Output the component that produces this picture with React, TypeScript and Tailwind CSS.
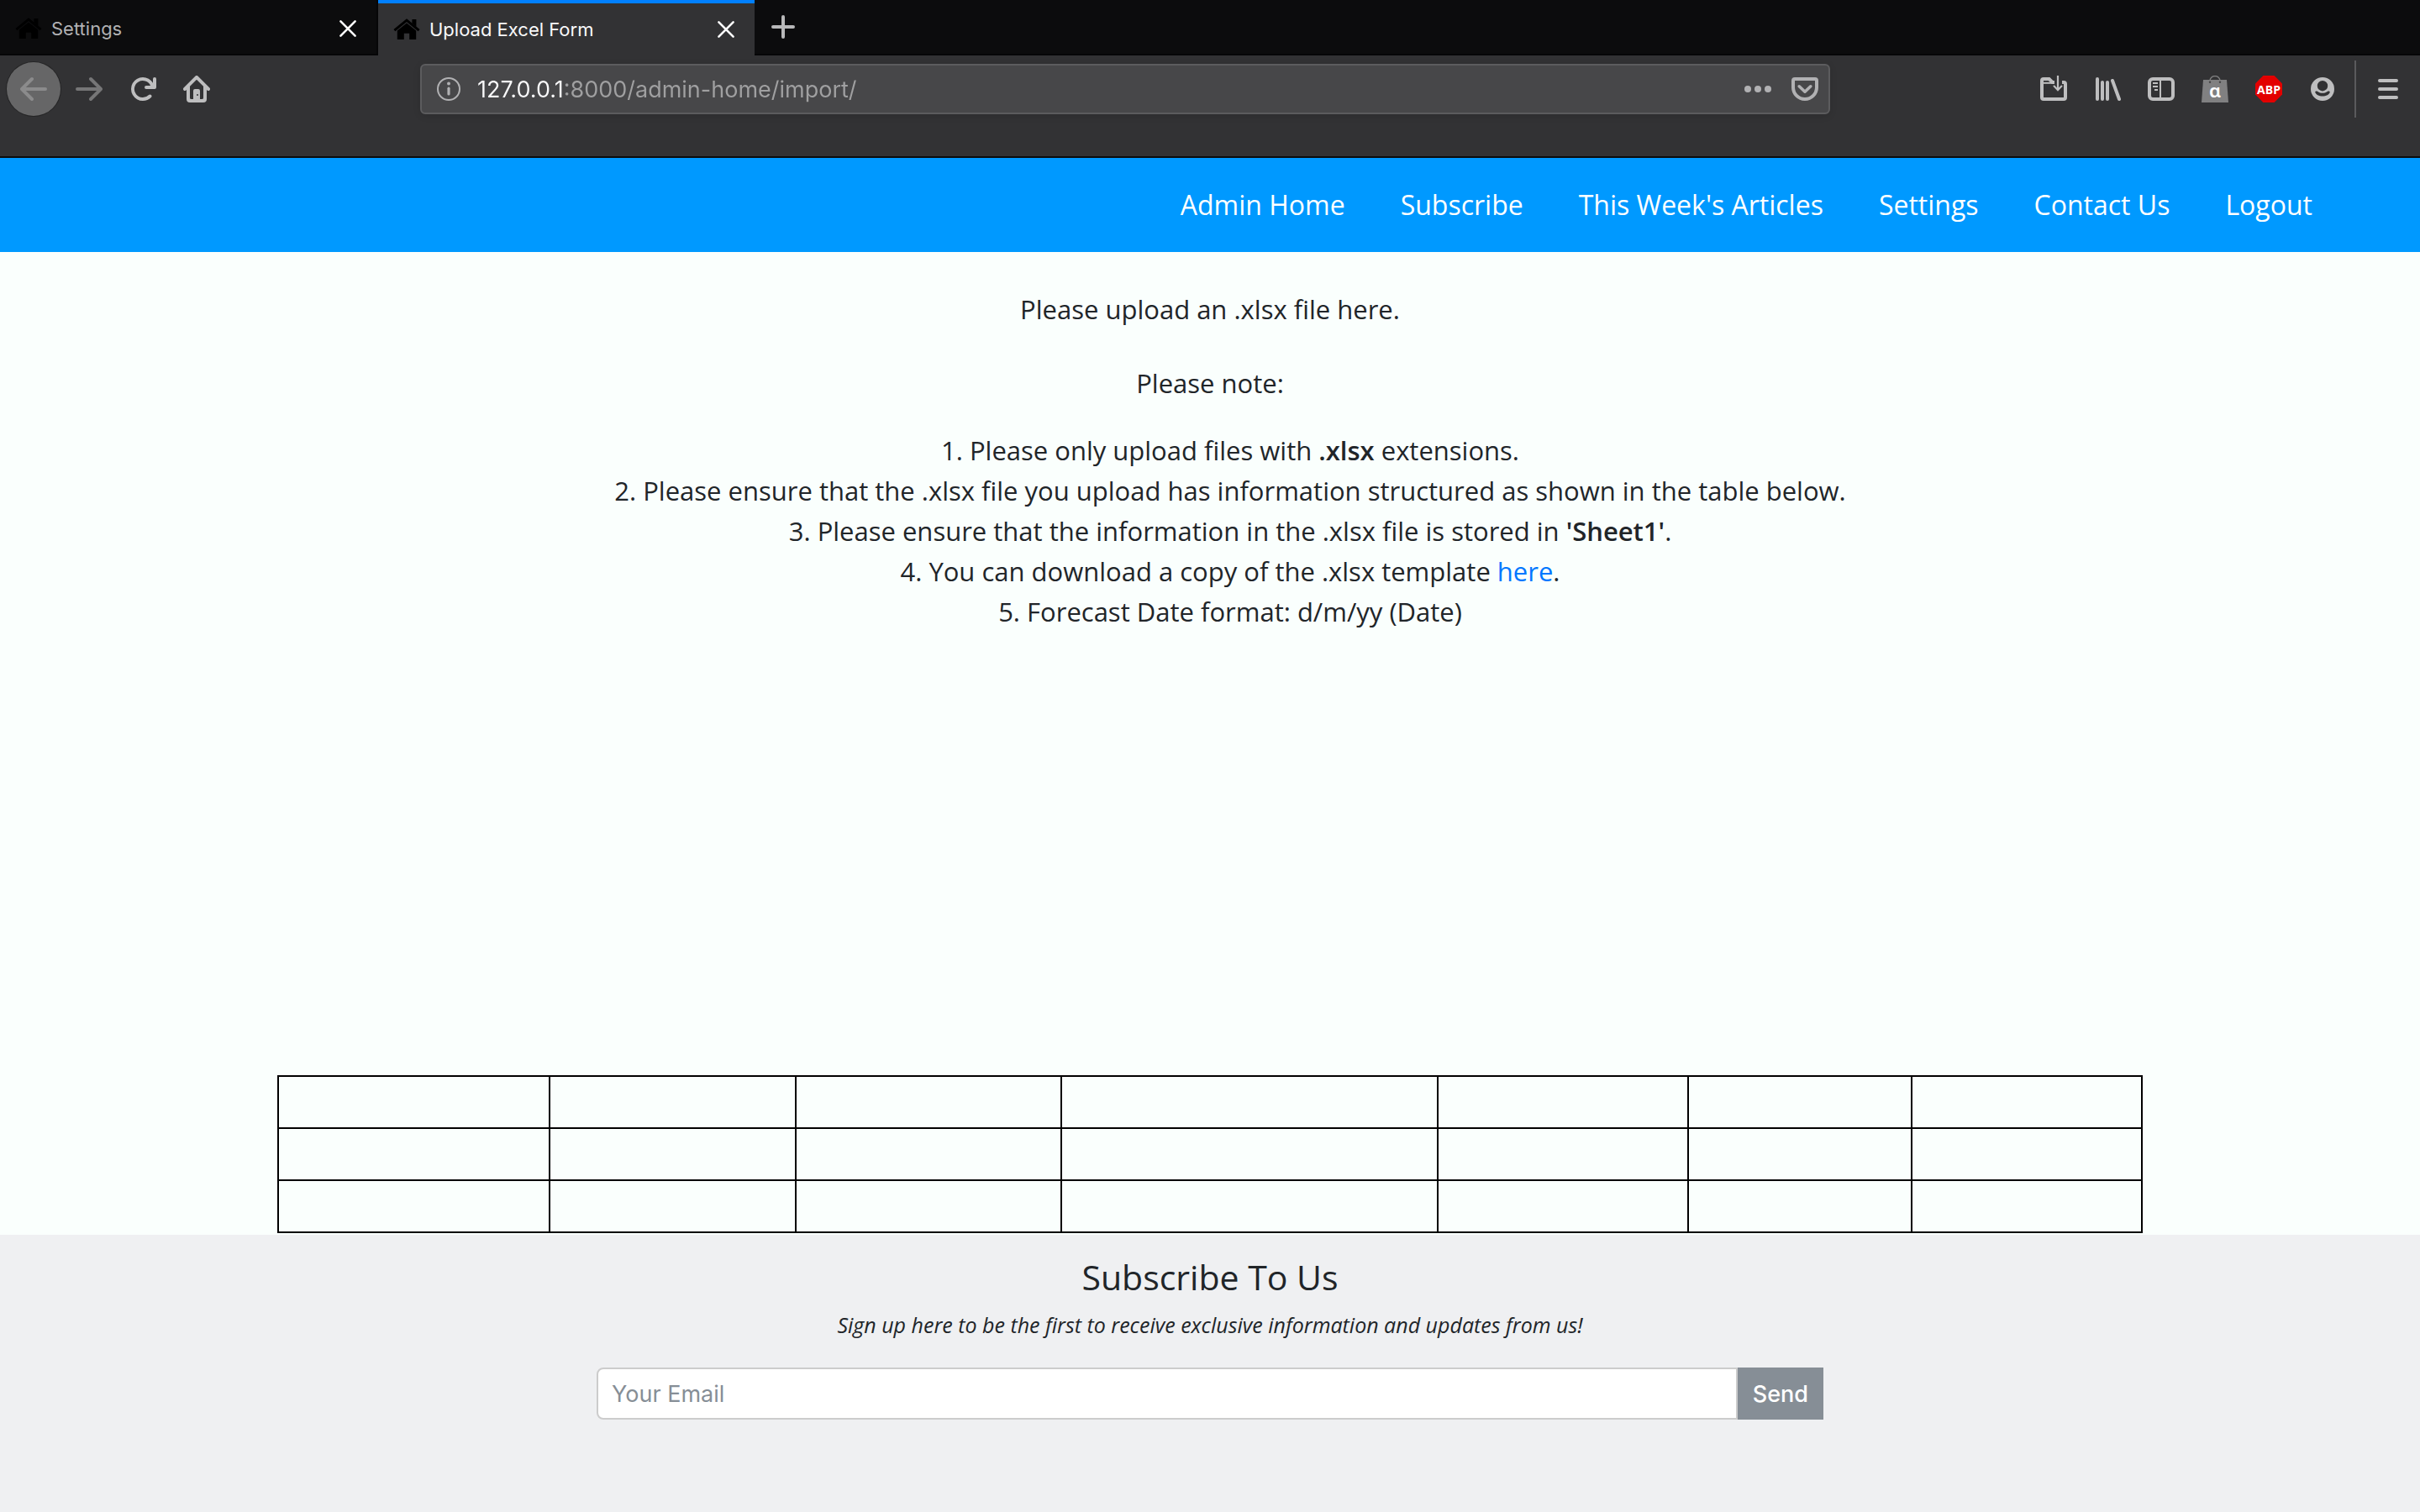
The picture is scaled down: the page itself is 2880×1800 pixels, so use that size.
import type { ReactNode } from "react";

function Icon({ children, label, className = "" }: { children: ReactNode; label?: string; className?: string }) {
  return (
    <svg
      viewBox="0 0 16 16"
      className={`size-8 shrink-0 fill-current ${className}`}
      role={label ? "img" : undefined}
      aria-label={label}
      aria-hidden={label ? undefined : true}
    >
      {children}
    </svg>
  );
}

function HouseFavicon() {
  return (
    <Icon className="text-black">
      <path d="M11.2 2h2.5v4.4l-2.5-2z" />
      <path d="M.7 8.6 8 2.6l7.3 6" fill="none" stroke="currentColor" strokeWidth="1.5" />
      <path d="M2.4 8.8 8 4.3l5.6 4.5V14H9.6v-3.6H6.4V14h-4z" />
    </Icon>
  );
}

function CloseIcon() {
  return (
    <Icon>
      <path d="m3.7 3.7 8.6 8.6m0-8.6-8.6 8.6" fill="none" stroke="currentColor" strokeWidth="1.3" strokeLinecap="round" />
    </Icon>
  );
}

const ARROW =
  "M15 7H3.414l4.293-4.293a1 1 0 0 0-1.414-1.414l-6 6a1 1 0 0 0 0 1.414l6 6a1 1 0 0 0 1.414-1.414L3.414 9H15a1 1 0 0 0 0-2z";

function TabStrip() {
  return (
    <div className="flex h-[66px] border-b-2 border-[#060607] bg-[#0c0c0d] text-[22px]" role="tablist">
      <div className="flex w-[450px] items-center gap-[11px] border-r-2 border-[#060607] pt-1 pr-[18px] pl-[18px] text-[#b1b1b3]">
        <HouseFavicon />
        <button role="tab" aria-selected="false" className="flex-1 text-left">Settings</button>
        <button aria-label="Close Settings tab" className="text-white"><CloseIcon /></button>
      </div>
      <div className="-mb-[2px] flex w-[448px] items-center gap-[11px] border-t-4 border-[#0080ff] bg-[#323234] pr-[18px] pl-[18px] text-[#f9f9fa]">
        <HouseFavicon />
        <button role="tab" aria-selected="true" className="flex-1 text-left">Upload Excel Form</button>
        <button aria-label="Close Upload Excel Form tab" className="text-white"><CloseIcon /></button>
      </div>
      <button aria-label="New tab" className="ml-[18px] text-[#b8b8b9]">
        <Icon>
          <path d="M8 2v12M2 8h12" fill="none" stroke="currentColor" strokeWidth="2" strokeLinecap="round" />
        </Icon>
      </button>
    </div>
  );
}

function Toolbar() {
  return (
    <div className="border-b-2 border-[#0c0c0d] bg-[#323234] pt-2 pb-12 text-[#bebebf]">
      <div className="flex h-16 items-center pl-2 pr-[22px]">
        <button aria-label="Back" className="flex size-16 items-center justify-center rounded-full bg-[#666667] text-[#8b8b8c] shadow-[0_0_0_1px_#252526]">
          <Icon><path d={ARROW} /></Icon>
        </button>
        <div className="ml-[18px] flex gap-8">
          <button aria-label="Forward" className="text-[#767677]">
            <Icon><path d={ARROW} transform="matrix(-1 0 0 1 16 0)" /></Icon>
          </button>
          <button aria-label="Reload">
            <Icon>
              <path d="M15 1a1 1 0 0 0-1 1v2.418A6.995 6.995 0 1 0 8 15a6.954 6.954 0 0 0 4.95-2.05 1 1 0 0 0-1.414-1.414A5.019 5.019 0 1 1 12.549 6H10a1 1 0 0 0 0 2h5a1 1 0 0 0 1-1V2a1 1 0 0 0-1-1z" />
            </Icon>
          </button>
          <button aria-label="Home">
            <Icon>
              <path
                fillRule="evenodd"
                d="M15.707 7.293l-7-7a1 1 0 0 0-1.414 0l-7 7a1 1 0 0 0 1.414 1.414L2 8.414V14a2 2 0 0 0 2 2h8a2 2 0 0 0 2-2V8.414l.293.293a1 1 0 0 0 1.414-1.414zM12 13.2a.8.8 0 0 1-.8.8H10V9a1 1 0 0 0-1-1H7a1 1 0 0 0-1 1v5H4.8a.8.8 0 0 1-.8-.8V6.414l4-4 4 4zM8.5 11a.5.5 0 1 1 0 1 .5.5 0 0 1 0-1z"
              />
            </Icon>
          </button>
        </div>

        <div className="mx-[250px] flex h-[60px] flex-1 items-center rounded-md border-2 border-[#5c5c5e] bg-[#474749] pl-4 pr-3 text-[#b1b1b3] shadow-[0_2px_8px_rgba(0,0,0,0.12)]">
          <Icon label="Site information">
            <circle cx="8" cy="8" r="6.5" fill="none" stroke="currentColor" strokeWidth="1" />
            <circle cx="8" cy="4.8" r="1" />
            <rect x="7.2" y="6.8" width="1.6" height="5" rx=".8" />
          </Icon>
          <input
            aria-label="Address"
            defaultValue="127.0.0.1:8000/admin-home/import/"
            className="ml-[18px] flex-1 bg-[linear-gradient(90deg,#f9f9fa_105px,#a0a0a1_105px)] bg-clip-text pt-[2px] text-[27px] text-transparent outline-none"
          />
          <button aria-label="Page actions">
            <Icon>
              <circle cx="2" cy="8" r="2" />
              <circle cx="8" cy="8" r="2" />
              <circle cx="14" cy="8" r="2" />
            </Icon>
          </button>
          <button aria-label="Save to Pocket" className="ml-6">
            <Icon>
              <path d="M2 2h12a1 1 0 0 1 1 1v4a7 7 0 0 1-14 0V3a1 1 0 0 1 1-1z" fill="none" stroke="currentColor" strokeWidth="2" />
              <path d="M4.6 6.4 8 9.6l3.4-3.2" fill="none" stroke="currentColor" strokeWidth="1.8" strokeLinecap="round" strokeLinejoin="round" />
            </Icon>
          </button>
        </div>

        <div className="flex items-center gap-8">
          <button aria-label="Downloads folder">
            <Icon>
              <path d="M13 4h1a1 1 0 0 1 1 1v8a1 1 0 0 1-1 1H2a1 1 0 0 1-1-1V3a1 1 0 0 1 1-1h3.300l2 2h1.200" fill="none" stroke="currentColor" strokeWidth="2" />
              <path d="M1.5 4.4h5.5" fill="none" stroke="currentColor" strokeWidth="1" />
              <path d="M10.5 0v8.500M8.300 6.300l2.200 2.300 2.200-2.300" fill="none" stroke="currentColor" strokeWidth="1.1" strokeLinecap="round" />
            </Icon>
          </button>
          <button aria-label="Library">
            <Icon>
              <path d="M2 2v12M5 4v10M8 4v10M11 3l4 11" fill="none" stroke="currentColor" strokeWidth="2" strokeLinecap="round" />
            </Icon>
          </button>
          <button aria-label="Sidebars">
            <Icon>
              <rect x="1" y="2" width="14" height="12" rx="2" fill="none" stroke="currentColor" strokeWidth="2" />
              <path d="M7.5 2v12M3 4.500h3M3 6.500h3M4 8.500h2" fill="none" stroke="currentColor" strokeWidth="1" />
            </Icon>
          </button>
          <button aria-label="Shopping assistant" className="text-[#808081]">
            <Icon>
              <path d="M1 2.500h14L16 16H0z" />
              <path d="M5 4V3a3 2.700 0 0 1 6 0v1" fill="none" stroke="currentColor" strokeWidth=".7" />
              <circle cx="5" cy="3.9" r=".6" className="fill-[#444446]" />
              <circle cx="11" cy="3.9" r=".6" className="fill-[#444446]" />
              <text x="8" y="13" textAnchor="middle" className="fill-white font-['Noto_Sans',sans-serif] text-[11px] font-semibold">ɑ</text>
            </Icon>
          </button>
          <button aria-label="Adblock Plus">
            <Icon>
              <path d="M4.700 0h6.600L16 4.700v6.600L11.300 16H4.700L0 11.300V4.700z" className="fill-[#e30000]" />
              <text x="8" y="11" textAnchor="middle" className="fill-white font-['Open_Sans',sans-serif] text-[7px] font-bold">ABP</text>
            </Icon>
          </button>
          <button aria-label="Account">
            <Icon>
              <path
                fillRule="evenodd"
                d="M8 1a7 7 0 1 1 0 14A7 7 0 0 1 8 1zM8 3a3 3 0 1 0 0 6.200A3 3 0 0 0 8 3zM3.600 9.800C3.800 11.300 6 12.300 8 12.300s4.200-1 4.400-2.500c-.2-.6-1-.7-1.500-.3C10 10.200 9 10.400 8 10.400s-2-.2-2.900-.9c-.5-.4-1.300-.3-1.500.3z"
              />
            </Icon>
          </button>
        </div>
        <div className="ml-[22px] h-[68px] w-[2px] bg-[#5b5b5d]" />
        <button aria-label="Open menu" className="ml-[22px]">
          <Icon>
            <path d="M3 3h10M3 8h10M3 13h10" fill="none" stroke="currentColor" strokeWidth="2" strokeLinecap="round" />
          </Icon>
        </button>
      </div>
    </div>
  );
}

const LINKS = ["Admin Home", "Subscribe", "This Week's Articles", "Settings", "Contact Us", "Logout"];
const COLUMNS = ["w-[323px]", "w-[293px]", "w-[316px]", "w-[448px]", "w-[298px]", "w-[266px]", "w-[274px]"];

export default function App() {
  return (
    <div className="flex min-h-screen flex-col bg-[#fafffd] font-['Inter',sans-serif] text-[#212529]">
      <header>
        <TabStrip />
        <Toolbar />
      </header>

      <nav className="flex h-28 items-center justify-end gap-[66px] bg-[#0099ff] pr-32 font-['Open_Sans',sans-serif] text-[32px] text-white">
        {LINKS.map((link) => (
          <a key={link} href="#">{link}</a>
        ))}
      </nav>

      <main className="flex flex-1 flex-col pt-11 pb-[2px] text-center font-['Open_Sans',sans-serif] text-[31px] leading-[48px]">
        <p>Please upload an .xlsx file here.</p>
        <p className="mt-10">Please note:</p>
        <ol className="mt-8 list-inside list-decimal pl-12">
          <li>Please only upload files with <b className="font-semibold">.xlsx</b> extensions.</li>
          <li>Please ensure that the .xlsx file you upload has information structured as shown in the table below.</li>
          <li>Please ensure that the information in the .xlsx file is stored in <b className="font-semibold">'Sheet1'</b>.</li>
          <li>You can download a copy of the .xlsx template <a href="#" className="text-[#0077ff]">here</a>.</li>
          <li>Forecast Date format: d/m/yy (Date)</li>
        </ol>
        <div className="mt-auto px-[330px]">
          <table className="w-full table-fixed border-collapse" aria-label="Spreadsheet template">
            <colgroup>
              {COLUMNS.map((width) => <col key={width} className={width} />)}
            </colgroup>
            <tbody>
              {[0, 1, 2].map((row) => (
                <tr key={row} className="h-[62px]">
                  {COLUMNS.map((width) => <td key={width} className="border-2 border-black" />)}
                </tr>
              ))}
            </tbody>
          </table>
        </div>
      </main>

      <footer className="bg-[#eff0f2] pt-5 pb-[110px] text-center">
        <h2 className="font-['Open_Sans',sans-serif] text-[41px] leading-[60px] font-medium">Subscribe To Us</h2>
        <p className="mt-2 font-['Open_Sans',sans-serif] text-[25px] leading-[38px] italic">
          Sign up here to be the first to receive exclusive information and updates from us!
        </p>
        <form className="mx-auto mt-8 flex h-[62px] max-w-[1460px] text-[27px]">
          <input
            type="email"
            aria-label="Your Email"
            placeholder="Your Email"
            className="min-w-0 flex-1 rounded-l-lg border-2 border-[#cccccc] bg-white px-4 pt-[2px] placeholder:text-[#868e96]"
          />
          <button type="button" className="bg-[#868e96] px-[18px] pt-[2px] font-medium text-white">Send</button>
        </form>
      </footer>
    </div>
  );
}
